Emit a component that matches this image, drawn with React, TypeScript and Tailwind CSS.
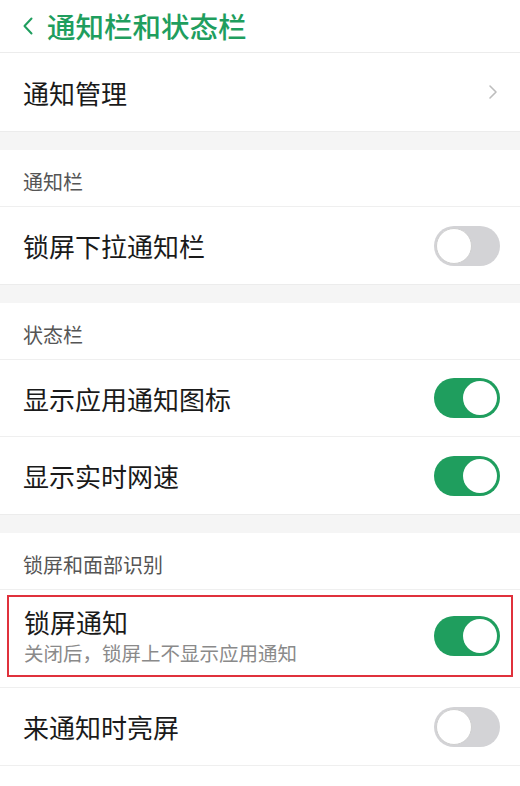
import React from "react";

const font = { fontFamily: '"Noto Sans CJK SC", "Noto Sans", sans-serif' };

function Toggle({ on }: { on: boolean }) {
  return on ? (
    <div className="w-[66px] h-[40px] rounded-full bg-[#1f9e5e] flex items-center justify-end p-[3px] shrink-0">
      <div className="w-[34px] h-[34px] rounded-full bg-white" />
    </div>
  ) : (
    <div className="w-[66px] h-[40px] rounded-full bg-[#d3d3d6] flex items-center justify-start p-[2px] shrink-0">
      <div className="w-[36px] h-[36px] rounded-full bg-white border border-[#cfcfcf]" />
    </div>
  );
}

function Gap() {
  return <div className="h-[19px] bg-[#f5f5f5] border-t border-[#ececec]" />;
}

function SectionHeader({ label }: { label: string }) {
  return (
    <div className="h-[57px] flex items-center pt-[8px] px-[23px] border-b border-[#efefef] bg-white">
      <span className="text-[20px] text-[#555]">{label}</span>
    </div>
  );
}

function Row({ label, on, last }: { label: string; on: boolean; last?: boolean }) {
  return (
    <div className={`h-[77px] flex items-center justify-between pl-[23px] pr-[20px] bg-white ${last ? "" : "border-b border-[#efefef]"}`}>
      <span className="text-[26px] text-[#1a1a1a]">{label}</span>
      <Toggle on={on} />
    </div>
  );
}

export default function App() {
  return (
    <div className="w-[520px] h-[786px] bg-white overflow-hidden" style={font}>
      <div className="h-[53px] flex items-center pl-[22px] gap-[13px] border-b border-[#ececec]">
        <svg width="12" height="22" viewBox="0 0 12 22" fill="none">
          <path d="M9.5 3.5 L2.5 11 L9.5 18.5" stroke="#1f9e5e" strokeWidth="2" strokeLinecap="round" strokeLinejoin="round" />
        </svg>
        <span className="text-[28.5px] text-[#1f9e5e] font-medium leading-none">通知栏和状态栏</span>
      </div>

      <div className="h-[78px] flex items-center justify-between pl-[23px] pr-[22px] bg-white">
        <span className="text-[26px] text-[#1a1a1a]">通知管理</span>
        <svg width="10" height="16" viewBox="0 0 10 16" fill="none">
          <path d="M2 2 L8 8 L2 14" stroke="#bdbdbd" strokeWidth="1.6" strokeLinecap="round" strokeLinejoin="round" />
        </svg>
      </div>

      <Gap />
      <SectionHeader label="通知栏" />
      <Row label="锁屏下拉通知栏" on={false} last />

      <Gap />
      <SectionHeader label="状态栏" />
      <Row label="显示应用通知图标" on />
      <Row label="显示实时网速" on last />

      <Gap />
      <SectionHeader label="锁屏和面部识别" />
      <div className="h-[98px] bg-white border-b border-[#efefef] flex items-start pt-[5px] px-[7px]">
        <div className="w-full h-[82px] border-2 border-[#e0313c] flex items-center justify-between pl-[15px] pr-[11px]">
          <div className="flex flex-col">
            <span className="text-[26px] text-[#1a1a1a] leading-[34px]">锁屏通知</span>
            <span className="text-[19.5px] text-[#8a8a8a] leading-[28px]">关闭后，锁屏上不显示应用通知</span>
          </div>
          <Toggle on />
        </div>
      </div>
      <div className="border-b border-[#efefef]">
        <Row label="来通知时亮屏" on={false} last />
      </div>
    </div>
  );
}
